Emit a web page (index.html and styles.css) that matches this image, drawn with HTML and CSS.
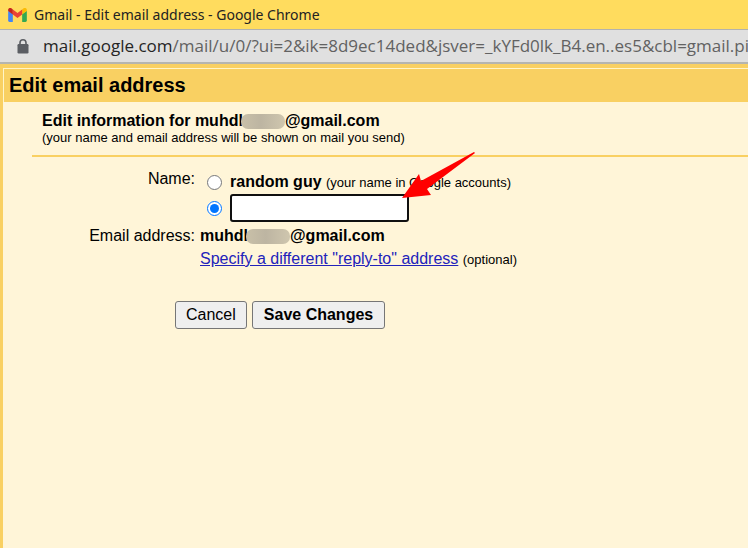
FILE: index.html
```html
<!DOCTYPE html>
<html lang="en">
<head>
<meta charset="utf-8">
<title>Gmail - Edit email address</title>
<link rel="stylesheet" href="styles.css">
</head>
<body>
<header class="titlebar">
  <svg class="logo" viewBox="0 0 20 15" aria-hidden="true">
    <path fill="#4285f4" d="M1.500 15H5V6.500L0 3v10.500Q0 15 1.500 15z"/>
    <path fill="#34a853" d="M15 15h3.500Q20 15 20 13.500V3l-5 3.500z"/>
    <path fill="#fbbc04" d="M15 1.500v5.500l5-3.700V2c0-1.900-2.100-2.600-3.400-1.700z"/>
    <path fill="#ea4335" d="M5 7V1.500l5 3.800 5-3.800V7l-5 3.800z"/>
    <path fill="#c5221f" d="M0 2v1.300L5 7V1.500L3.400.3C2.100-.6 0 .1 0 2z"/>
  </svg>
  <span>Gmail - Edit email address - Google Chrome</span>
</header>
<div class="urlbar">
  <svg class="lock" viewBox="0 0 12 15" aria-hidden="true">
    <path fill="none" stroke="#5b5e63" stroke-width="1.600" d="M3 6V3.800a3 3 0 0 1 6 0V6"/>
    <rect x="0.500" y="5" width="11" height="9.500" rx="1.200" fill="#5b5e63"/>
  </svg>
  <span class="url"><span class="host">mail.google.com</span>/mail/u/0/?ui=2&amp;ik=8d9ec14ded&amp;jsver=_kYFd0lk_B4.en..es5&amp;cbl=gmail.pi</span>
</div>
<main class="page">
  <h1>Edit email address</h1>
  <section class="intro">
    <h2>Edit information for muhdl<span class="smudge"></span>@gmail.com</h2>
    <p>(your name and email address will be shown on mail you send)</p>
  </section>
  <form class="form">
    <div class="label" id="name-label">Name:</div>
    <div class="names" role="radiogroup" aria-labelledby="name-label">
      <div class="choice">
        <input type="radio" name="who" id="account">
        <label for="account"><b>random guy</b> <small>(your name in Google accounts)</small></label>
      </div>
      <div class="choice">
        <input type="radio" name="who" id="custom" aria-label="Custom name" checked>
        <span class="field">
          <input type="text" class="name" aria-label="Name">
          <svg class="arrow" viewBox="0 0 74 48" aria-hidden="true">
            <path fill="#f00" d="M0 46 17 22 19 29 72 0 73 1 25 37 29 43z"/>
          </svg>
        </span>
      </div>
    </div>
    <div class="label">Email address:</div>
    <div class="value"><b>muhdl<span class="smudge"></span>@gmail.com</b></div>
    <div class="value reply"><a href="#reply-to">Specify a different "reply-to" address</a> <small>(optional)</small></div>
    <div class="actions">
      <button type="button">Cancel</button>
      <button type="submit" class="primary">Save Changes</button>
    </div>
  </form>
</main>
</body>
</html>
```
FILE: styles.css
```css
* { box-sizing: border-box; }

body {
  margin: 0;
  min-height: 100vh;
  display: flex;
  flex-direction: column;
  overflow: hidden;
  background: #fff5d8;
  color: #000;
  font: 16px/20px "Liberation Sans", Arial, sans-serif;
}

.titlebar {
  display: flex;
  align-items: center;
  gap: 7px;
  height: 29px;
  padding-left: 8px;
  background: #ffdc5e;
  color: #222;
  font: 14px/20px "Noto Sans", "Open Sans", sans-serif;
}

.logo { width: 19px; height: 14px; }

.urlbar {
  display: flex;
  align-items: center;
  gap: 14px;
  height: 35px;
  padding-left: 17px;
  background: #e0e0e0;
  border-top: 1px solid #b2b2ae;
  border-bottom: 2px solid #b5b5b0;
  color: #626262;
  font: 17px/24px "Open Sans", "Noto Sans", sans-serif;
}

.lock { flex: none; width: 12px; height: 15px; }
.url { white-space: nowrap; }
.host { color: #252525; }

.page {
  flex: 1;
  border-top: 4px solid #f9d062;
  border-left: 3px solid #f9d062;
}

h1 {
  margin: 0;
  padding: 4px 5px 5px;
  border-top: 1px solid #fff5c8;
  border-left: 1px solid #fff5c8;
  background: #f9d062;
  font-size: 20px;
  line-height: 24px;
}

.intro {
  margin-left: 29px;
  padding: 9px 10px 10px;
  border-bottom: 2px solid #f9d062;
}

h2 { margin: 0; font-size: 16px; line-height: 20px; }
p { margin: 0; font-size: 13px; line-height: 14px; }
small { font-size: 13px; }

.smudge {
  display: inline-block;
  width: 44px;
  height: 15px;
  margin-left: -2px;
  border-radius: 7px;
  background: linear-gradient(90deg, #c9c0a8, #bdb5a2 45%, #cfc6ae);
  vertical-align: -3px;
}

.form {
  display: grid;
  grid-template-columns: 192px 1fr;
  column-gap: 5px;
}

.label { padding-top: 1px; text-align: right; }
.names { padding-top: 12px; }
.names, .label:first-child { margin-bottom: 4px; }
.label:first-child { padding-top: 12px; }

.choice {
  display: flex;
  align-items: center;
  gap: 8px;
  height: 26px;
}

.choice input[type="radio"] {
  width: 15px;
  height: 15px;
  margin: 0 0 0 7px;
  accent-color: #0075ff;
}

.field { position: relative; display: flex; }

.name {
  width: 179px;
  height: 28px;
  padding: 2px 4px;
  border: 2px solid #101010;
  border-radius: 3px;
  outline: none;
  background: #fff;
  font: inherit;
}

.arrow {
  position: absolute;
  left: 172px;
  bottom: 22px;
  width: 74px;
  height: 48px;
}

.value { padding-top: 1px; }
.reply { grid-column: 2; padding-top: 3px; }
a { color: #2222bb; }

.actions {
  grid-column: 1 / -1;
  display: flex;
  gap: 5px;
  margin-top: 31px;
  padding-left: 172px;
}

button {
  height: 28px;
  padding: 0 10px;
  border: 1px solid #767676;
  border-radius: 3px;
  background: #efefef;
  color: #000;
  font: inherit;
}

.primary { padding: 0 11px; font-weight: bold; }
```
